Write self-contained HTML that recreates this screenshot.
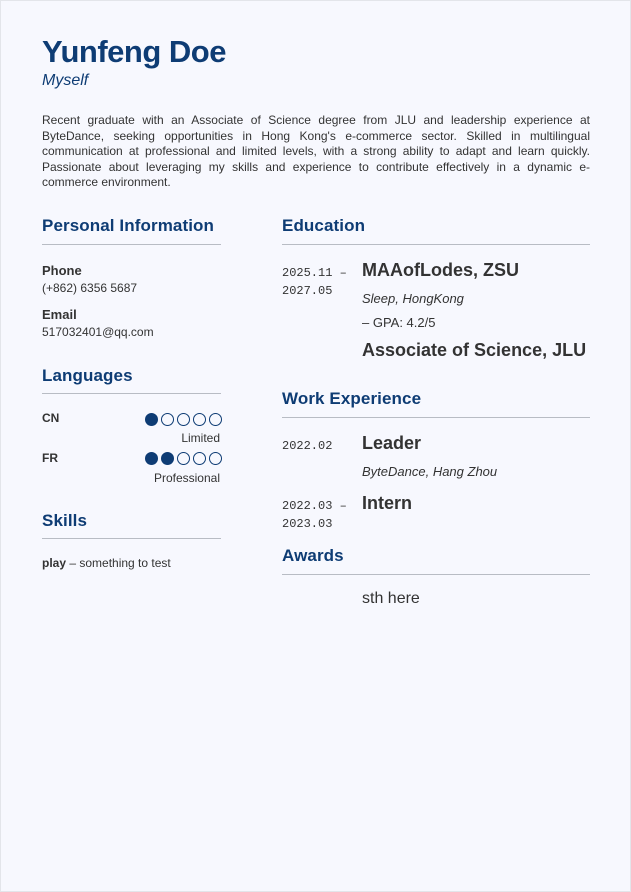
<!DOCTYPE html>
<html><head><meta charset="utf-8"><style>
*{margin:0;padding:0;box-sizing:border-box}
html,body{width:631px;height:892px;background:#fff;overflow:hidden}
body{font-family:"Liberation Sans",sans-serif;color:#333;position:relative}
.page{position:absolute;left:0;top:0;width:631px;height:892px;background:#f7f8fe;border:1px solid #e3e5ea}
.a{position:absolute;white-space:nowrap}
.blue{color:#0e3c74}
h2{position:absolute;font-weight:bold;font-size:17px;color:#0e3c74;letter-spacing:0.1px}
.hr{position:absolute;height:1px;background:#b8bcc4}
.mono{font-family:"Liberation Mono",monospace;font-size:12px;line-height:18px;color:#333}
.dots{position:absolute;display:flex;gap:3px}
.dots i{display:block;width:13px;height:13px;border-radius:50%;border:1.3px solid #0e3c74}
.dots i.f{background:#0e3c74}
</style></head><body><div class="page">
<div class="a blue" style="left:41px;top:33px;font-size:31px;font-weight:bold;letter-spacing:-0.5px">Yunfeng Doe</div>
<div class="a blue" style="left:41px;top:71px;font-size:16px;font-style:italic">Myself</div>
<div class="a" style="left:41px;top:112px;width:548px;white-space:normal;font-size:12px;line-height:15.5px;text-align:justify;color:#333">Recent graduate with an Associate of Science degree from JLU and leadership experience at ByteDance, seeking opportunities in Hong Kong's e-commerce sector. Skilled in multilingual communication at professional and limited levels, with a strong ability to adapt and learn quickly. Passionate about leveraging my skills and experience to contribute effectively in a dynamic e-commerce environment.</div>

<h2 style="left:41px;top:215px">Personal Information</h2>
<div class="hr" style="left:41px;top:243px;width:179px"></div>
<div class="a" style="left:41px;top:262px;font-size:13px;font-weight:bold">Phone</div>
<div class="a" style="left:41px;top:280px;font-size:12px">(+862) 6356 5687</div>
<div class="a" style="left:41px;top:306px;font-size:13px;font-weight:bold">Email</div>
<div class="a" style="left:41px;top:324px;font-size:12px">517032401@qq.com</div>

<h2 style="left:41px;top:365px">Languages</h2>
<div class="hr" style="left:41px;top:392px;width:179px"></div>
<div class="a" style="left:41px;top:410px;font-size:12px;font-weight:bold">CN</div>
<div class="dots" style="left:144px;top:412px"><i class="f"></i><i></i><i></i><i></i><i></i></div>
<div class="a" style="right:410px;top:430px;font-size:12px">Limited</div>
<div class="a" style="left:41px;top:450px;font-size:12px;font-weight:bold">FR</div>
<div class="dots" style="left:144px;top:451px"><i class="f"></i><i class="f"></i><i></i><i></i><i></i></div>
<div class="a" style="right:410px;top:470px;font-size:12px">Professional</div>

<h2 style="left:41px;top:510px">Skills</h2>
<div class="hr" style="left:41px;top:537px;width:179px"></div>
<div class="a" style="left:41px;top:555px;font-size:12px"><b>play</b> – something to test</div>

<h2 style="left:281px;top:215px">Education</h2>
<div class="hr" style="left:281px;top:243px;width:308px"></div>
<div class="a mono" style="left:281px;top:263px">2025.11 –<br>2027.05</div>
<div class="a" style="left:361px;top:259px;font-size:18px;font-weight:bold">MAAofLodes, ZSU</div>
<div class="a" style="left:361px;top:290px;font-size:13px;font-style:italic">Sleep, HongKong</div>
<div class="a" style="left:361px;top:314px;font-size:13px">– GPA: 4.2/5</div>
<div class="a" style="left:361px;top:339px;font-size:18px;font-weight:bold">Associate of Science, JLU</div>

<h2 style="left:281px;top:388px">Work Experience</h2>
<div class="hr" style="left:281px;top:416px;width:308px"></div>
<div class="a mono" style="left:281px;top:436px">2022.02</div>
<div class="a" style="left:361px;top:432px;font-size:18px;font-weight:bold">Leader</div>
<div class="a" style="left:361px;top:463px;font-size:13px;font-style:italic">ByteDance, Hang Zhou</div>
<div class="a mono" style="left:281px;top:496px">2022.03 –<br>2023.03</div>
<div class="a" style="left:361px;top:492px;font-size:18px;font-weight:bold">Intern</div>

<h2 style="left:281px;top:545px">Awards</h2>
<div class="hr" style="left:281px;top:573px;width:308px"></div>
<div class="a" style="left:361px;top:589px;font-size:16px">sth here</div>
</div></body></html>
